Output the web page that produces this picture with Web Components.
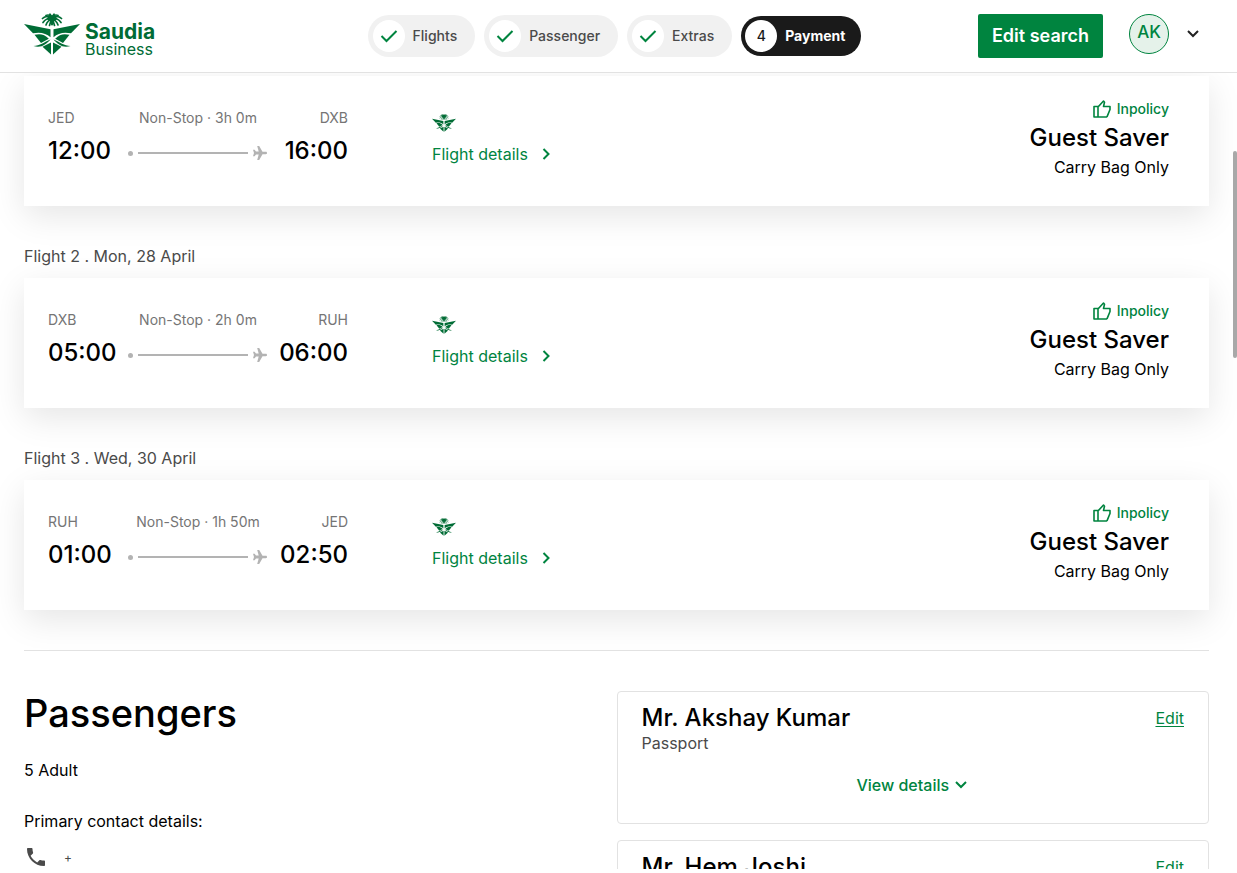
<!DOCTYPE html>
<html lang="en">
<head>
<meta charset="utf-8">
<title>Saudia Business – Payment</title>
<style>
  html, body { height: 100%; }
  body { margin: 0; background: #fff; color: #000; font-family: Inter, "Liberation Sans", sans-serif; font-size: 16px; }
</style>
</head>
<body>
<booking-page>
  <site-header slot="header">
    <step-pill done>Flights</step-pill>
    <step-pill done>Passenger</step-pill>
    <step-pill done>Extras</step-pill>
    <step-pill number="4">Payment</step-pill>
  </site-header>
  <flight-card from="JED" to="DXB" depart="12:00" arrive="16:00" duration="3h 0m"></flight-card>
  <flight-card from="DXB" to="RUH" depart="05:00" arrive="06:00" duration="2h 0m"><h2 slot="title">Flight 2 . Mon, 28 April</h2></flight-card>
  <flight-card from="RUH" to="JED" depart="01:00" arrive="02:50" duration="1h 50m"><h2 slot="title">Flight 3 . Wed, 30 April</h2></flight-card>
  <passenger-section>
    <passenger-card>Mr. Akshay Kumar</passenger-card>
    <passenger-card>Mr. Hem Joshi</passenger-card>
  </passenger-section>
</booking-page>

<script>
const define = (name, render) => customElements.define(name, class extends HTMLElement {
  constructor() {
    super();
    this.attachShadow({ mode: "open" });
  }
  connectedCallback() {
    this.shadowRoot.innerHTML = render(this);
  }
});

define("saudia-emblem", () => `
  <style>
    :host { display: block; color: #006c35; }
    svg { display: block; width: 100%; height: 100%; }
  </style>
  <svg viewBox="0 0 56 42" preserveAspectRatio="none" aria-hidden="true">
    <defs>
      <g id="wing">
        <path fill="currentColor" d="M0 11 26.500 16.200V24.300C22 20 16 18.800 9 20.300Z"/>
        <path fill="currentColor" d="M10.500 21.800C16 20.300 20.500 21.200 24.800 25.700L17 30Z"/>
        <path fill="currentColor" d="M9.500 33C16 33 20 29 26.500 26.500 22 31.500 17 35.500 9.500 33Z"/>
        <path fill="currentColor" d="M27 29.500V41.500L18.500 33.800Z"/>
        <path fill="none" stroke="currentColor" stroke-width="1.700" stroke-linecap="round" d="M28 5C25 3 21 3 18.500 5.500M28 5C24 5 21 6.500 19 9.500M28 6C25 7 23 9 22 12M28 6C27 8 26 10 25.500 12.500M28 4C26 2 24 1.500 22 2.500M28 4 26 1.200M28 4V11.500"/>
      </g>
    </defs>
    <use href="#wing"/>
    <use href="#wing" transform="matrix(-1 0 0 1 56 0)"/>
    <ellipse cx="28" cy="5.500" rx="5" ry="3" fill="currentColor"/>
  </svg>`);

define("step-pill", el => {
  const done = el.hasAttribute("done");
  return `
  <style>
    :host { display: block; }
    button { display: flex; align-items: center; gap: 8px; margin: 0; padding: 5px 18px 5px 5px; border: 0; border-radius: 21px; background: #f1f1f1; color: #4a4a4a; font: 500 14px/20px Inter, sans-serif; }
    button.current { padding: 4px 16px 4px 4px; background: #1a1a1a; color: #fff; font-weight: 700; }
    i { display: flex; align-items: center; justify-content: center; width: 32px; height: 32px; border-radius: 50%; background: #fff; color: #1a1a1a; font-style: normal; font-weight: 500; }
  </style>
  <button type="button" class="${done ? "done" : "current"}">
    <i>${done
      ? `<svg width="18" height="14" viewBox="0 0 18 14" aria-hidden="true"><path fill="none" stroke="#00843f" stroke-width="2" d="M1.500 7 6.500 12 16.500 2"/></svg>`
      : el.getAttribute("number")}</i>
    <slot></slot>
  </button>`;
});

define("site-header", () => `
  <style>
    :host { display: block; background: #fff; border-bottom: 1px solid #e2e2e2; }
    header { display: grid; grid-template-columns: 1fr auto 1fr; align-items: center; height: 72px; padding: 0 32px 0 24px; }
    .logo { display: flex; align-items: center; gap: 5px; justify-self: start; color: #006c35; text-decoration: none; margin-bottom: 4px; }
    saudia-emblem { width: 56px; height: 42px; }
    .name { display: grid; padding-top: 12px; }
    .name b { font: 700 21px/18px Inter, sans-serif; }
    .name span { font: 400 16px/16px Inter, sans-serif; }
    nav { display: flex; align-items: center; gap: 9px; }
    .tools { display: flex; align-items: center; justify-self: end; gap: 12px; margin-bottom: 4px; }
    .search { height: 44px; margin: 4px 14px 0 0; padding: 0 14px; border: 0; border-radius: 2px; background: #00843f; color: #fff; font: 600 18px/24px Inter, sans-serif; }
    .avatar { display: flex; align-items: center; justify-content: center; box-sizing: border-box; width: 40px; height: 40px; padding: 0 0 4px; border: 1px solid #00843f; border-radius: 50%; background: #e5f2ea; color: #00843f; font: 500 17px/20px Inter, sans-serif; }
    .menu { display: flex; align-items: center; justify-content: center; width: 24px; height: 24px; padding: 0; border: 0; background: none; }
  </style>
  <header>
    <a class="logo" href="#">
      <saudia-emblem></saudia-emblem>
      <span class="name"><b>Saudia</b><span>Business</span></span>
    </a>
    <nav aria-label="Booking steps"><slot></slot></nav>
    <div class="tools">
      <button class="search" type="button">Edit search</button>
      <button class="avatar" type="button">AK</button>
      <button class="menu" type="button" aria-label="Account menu">
        <svg width="12" height="8" viewBox="0 0 12 8"><path fill="none" stroke="#222" stroke-width="2" d="M1 1 6 6 11 1"/></svg>
      </button>
    </div>
  </header>`);

define("flight-card", el => `
  <style>
    :host { display: block; }
    ::slotted(h2) { margin: 0; padding: 38px 0 10px; color: #4a4a4a; font-size: 16px; font-weight: 400; line-height: 24px; }
    article { display: flex; align-items: flex-start; padding: 24px 40px 30px 24px; background: #fff; box-shadow: 0 10px 32px rgba(0,0,0,.1); }
    .leg { display: grid; grid-template-columns: 80px 140px 80px; row-gap: 8px; padding-top: 8px; }
    .small { color: #757575; font-size: 14px; line-height: 20px; white-space: nowrap; }
    .time { font-size: 24px; font-weight: 500; line-height: 30px; white-space: nowrap; }
    .mid { text-align: center; }
    .end { justify-self: end; }
    .line { display: flex; align-items: center; gap: 5px; padding: 4px 1px 0 0; color: #b3b3b3; }
    .dot { width: 5px; height: 5px; border-radius: 50%; background: currentColor; }
    .bar { flex: 1; height: 2px; background: currentColor; }
    .info { display: grid; gap: 12px; margin-left: 84px; padding-top: 14px; }
    saudia-emblem { width: 24px; height: 18px; }
    a { display: flex; align-items: center; gap: 14px; color: #00843f; text-decoration: none; font-size: 16px; line-height: 20px; }
    .fare { display: grid; justify-items: end; gap: 4px; margin-left: auto; line-height: 18px; }
    .policy { display: flex; align-items: center; gap: 6px; color: #00843f; font-size: 14px; font-weight: 500; }
    h3 { margin: 0; font-size: 24px; font-weight: 500; line-height: 32px; }
    p { margin: 0; }
  </style>
  <slot name="title"></slot>
  <article>
    <div class="leg">
      <span class="small">${el.getAttribute("from")}</span>
      <span class="small mid">Non-Stop · ${el.getAttribute("duration")}</span>
      <span class="small end">${el.getAttribute("to")}</span>
      <span class="time">${el.getAttribute("depart")}</span>
      <div class="line">
        <span class="dot"></span><span class="bar"></span>
        <svg width="14" height="14" viewBox="0 0 14 14" aria-hidden="true"><path fill="currentColor" d="M14 7C14 6.200 13.500 5.800 12.800 5.800H9.500L6.200 0H4.200L5.700 5.600H3L1.600 3.800H0L1 7 0 10.200H1.600L3 8.400H5.700L4.200 14H6.200L9.500 8.200H12.800C13.500 8.200 14 7.800 14 7Z"/></svg>
      </div>
      <span class="time end">${el.getAttribute("arrive")}</span>
    </div>
    <div class="info">
      <saudia-emblem></saudia-emblem>
      <a href="#">Flight details
        <svg width="8" height="12" viewBox="0 0 8 12" aria-hidden="true"><path fill="none" stroke="currentColor" stroke-width="2" d="M1.500 1 6.500 6 1.500 11"/></svg>
      </a>
    </div>
    <div class="fare">
      <span class="policy">
        <svg width="18" height="18" viewBox="0 0 18 18" aria-hidden="true"><path fill="none" stroke="currentColor" stroke-width="1.600" stroke-linejoin="round" d="M1 6.500H5V17H1ZM5 7 10.500 1 11.500 2.200 10.500 6.500H17V9.500L14.200 16.400 13.500 17H5"/></svg>
        Inpolicy
      </span>
      <h3>Guest Saver</h3>
      <p>Carry Bag Only</p>
    </div>
  </article>`);

define("passenger-card", () => `
  <style>
    :host { display: block; }
    article { padding: 10px 24px 28px; border: 1px solid #e2e2e2; border-radius: 4px; background: #fff; }
    .top { display: flex; align-items: center; justify-content: space-between; }
    h3 { margin: 0; font-size: 24px; font-weight: 500; line-height: 32px; }
    a { color: #00843f; text-underline-offset: 2px; }
    p { margin: 0 0 23px; color: #4a4a4a; line-height: 18px; }
    button { display: flex; align-items: center; gap: 4px; margin: 0 auto; padding: 0; border: 0; background: none; color: #00843f; font: 500 16px/20px Inter, sans-serif; }
  </style>
  <article>
    <div class="top"><h3><slot></slot></h3><a href="#">Edit</a></div>
    <p>Passport</p>
    <button type="button">View details
      <svg width="16" height="8" viewBox="-2 0 16 8" aria-hidden="true"><path fill="none" stroke="currentColor" stroke-width="2" d="M1 1 6 6 11 1"/></svg>
    </button>
  </article>`);

define("passenger-section", () => `
  <style>
    :host { display: grid; grid-template-columns: 1fr 1fr; margin-top: 40px; padding-top: 40px; border-top: 1px solid #e2e2e2; }
    h1 { margin: 0 0 23px; font-size: 38px; font-weight: 500; line-height: 44px; }
    p { margin: 0; line-height: 24px; }
    .contact { padding-top: 27px; }
    .phone { display: flex; align-items: center; gap: 16px; padding-top: 12px; color: #4a4a4a; font-size: 12px; }
    .list { display: grid; align-content: start; gap: 16px; }
  </style>
  <section>
    <h1>Passengers</h1>
    <p>5 Adult</p>
    <p class="contact">Primary contact details:</p>
    <div class="phone">
      <svg width="24" height="24" viewBox="0 0 24 24" aria-hidden="true"><path fill="currentColor" d="M6.600 10.800c1.400 2.800 3.800 5.100 6.600 6.600l2.200-2.200c.3-.3.700-.4 1-.2 1.100.4 2.300.6 3.600.6.600 0 1 .4 1 1V20c0 .6-.4 1-1 1C10.600 21 3 13.400 3 4c0-.6.500-1 1-1h3.500c.6 0 1 .4 1 1 0 1.200.2 2.500.6 3.600.1.300 0 .7-.2 1z"/></svg>
      <span>+</span>
    </div>
  </section>
  <div class="list"><slot></slot></div>`);

define("booking-page", () => `
  <style>
    :host { display: flex; flex-direction: column; box-sizing: border-box; height: 100vh; padding-bottom: 4px; position: relative; overflow: hidden; }
    ::slotted([slot=header]) { position: relative; z-index: 1; }
    main { flex: 1; min-height: 0; overflow: hidden; padding: 3px 28px 0 24px; }
    .thumb { position: absolute; right: 0; top: 151px; width: 4px; height: 207px; border-radius: 2px; background: #a8a8a8; }
  </style>
  <slot name="header"></slot>
  <main><slot></slot></main>
  <div class="thumb"></div>`);
</script>
</body>
</html>
